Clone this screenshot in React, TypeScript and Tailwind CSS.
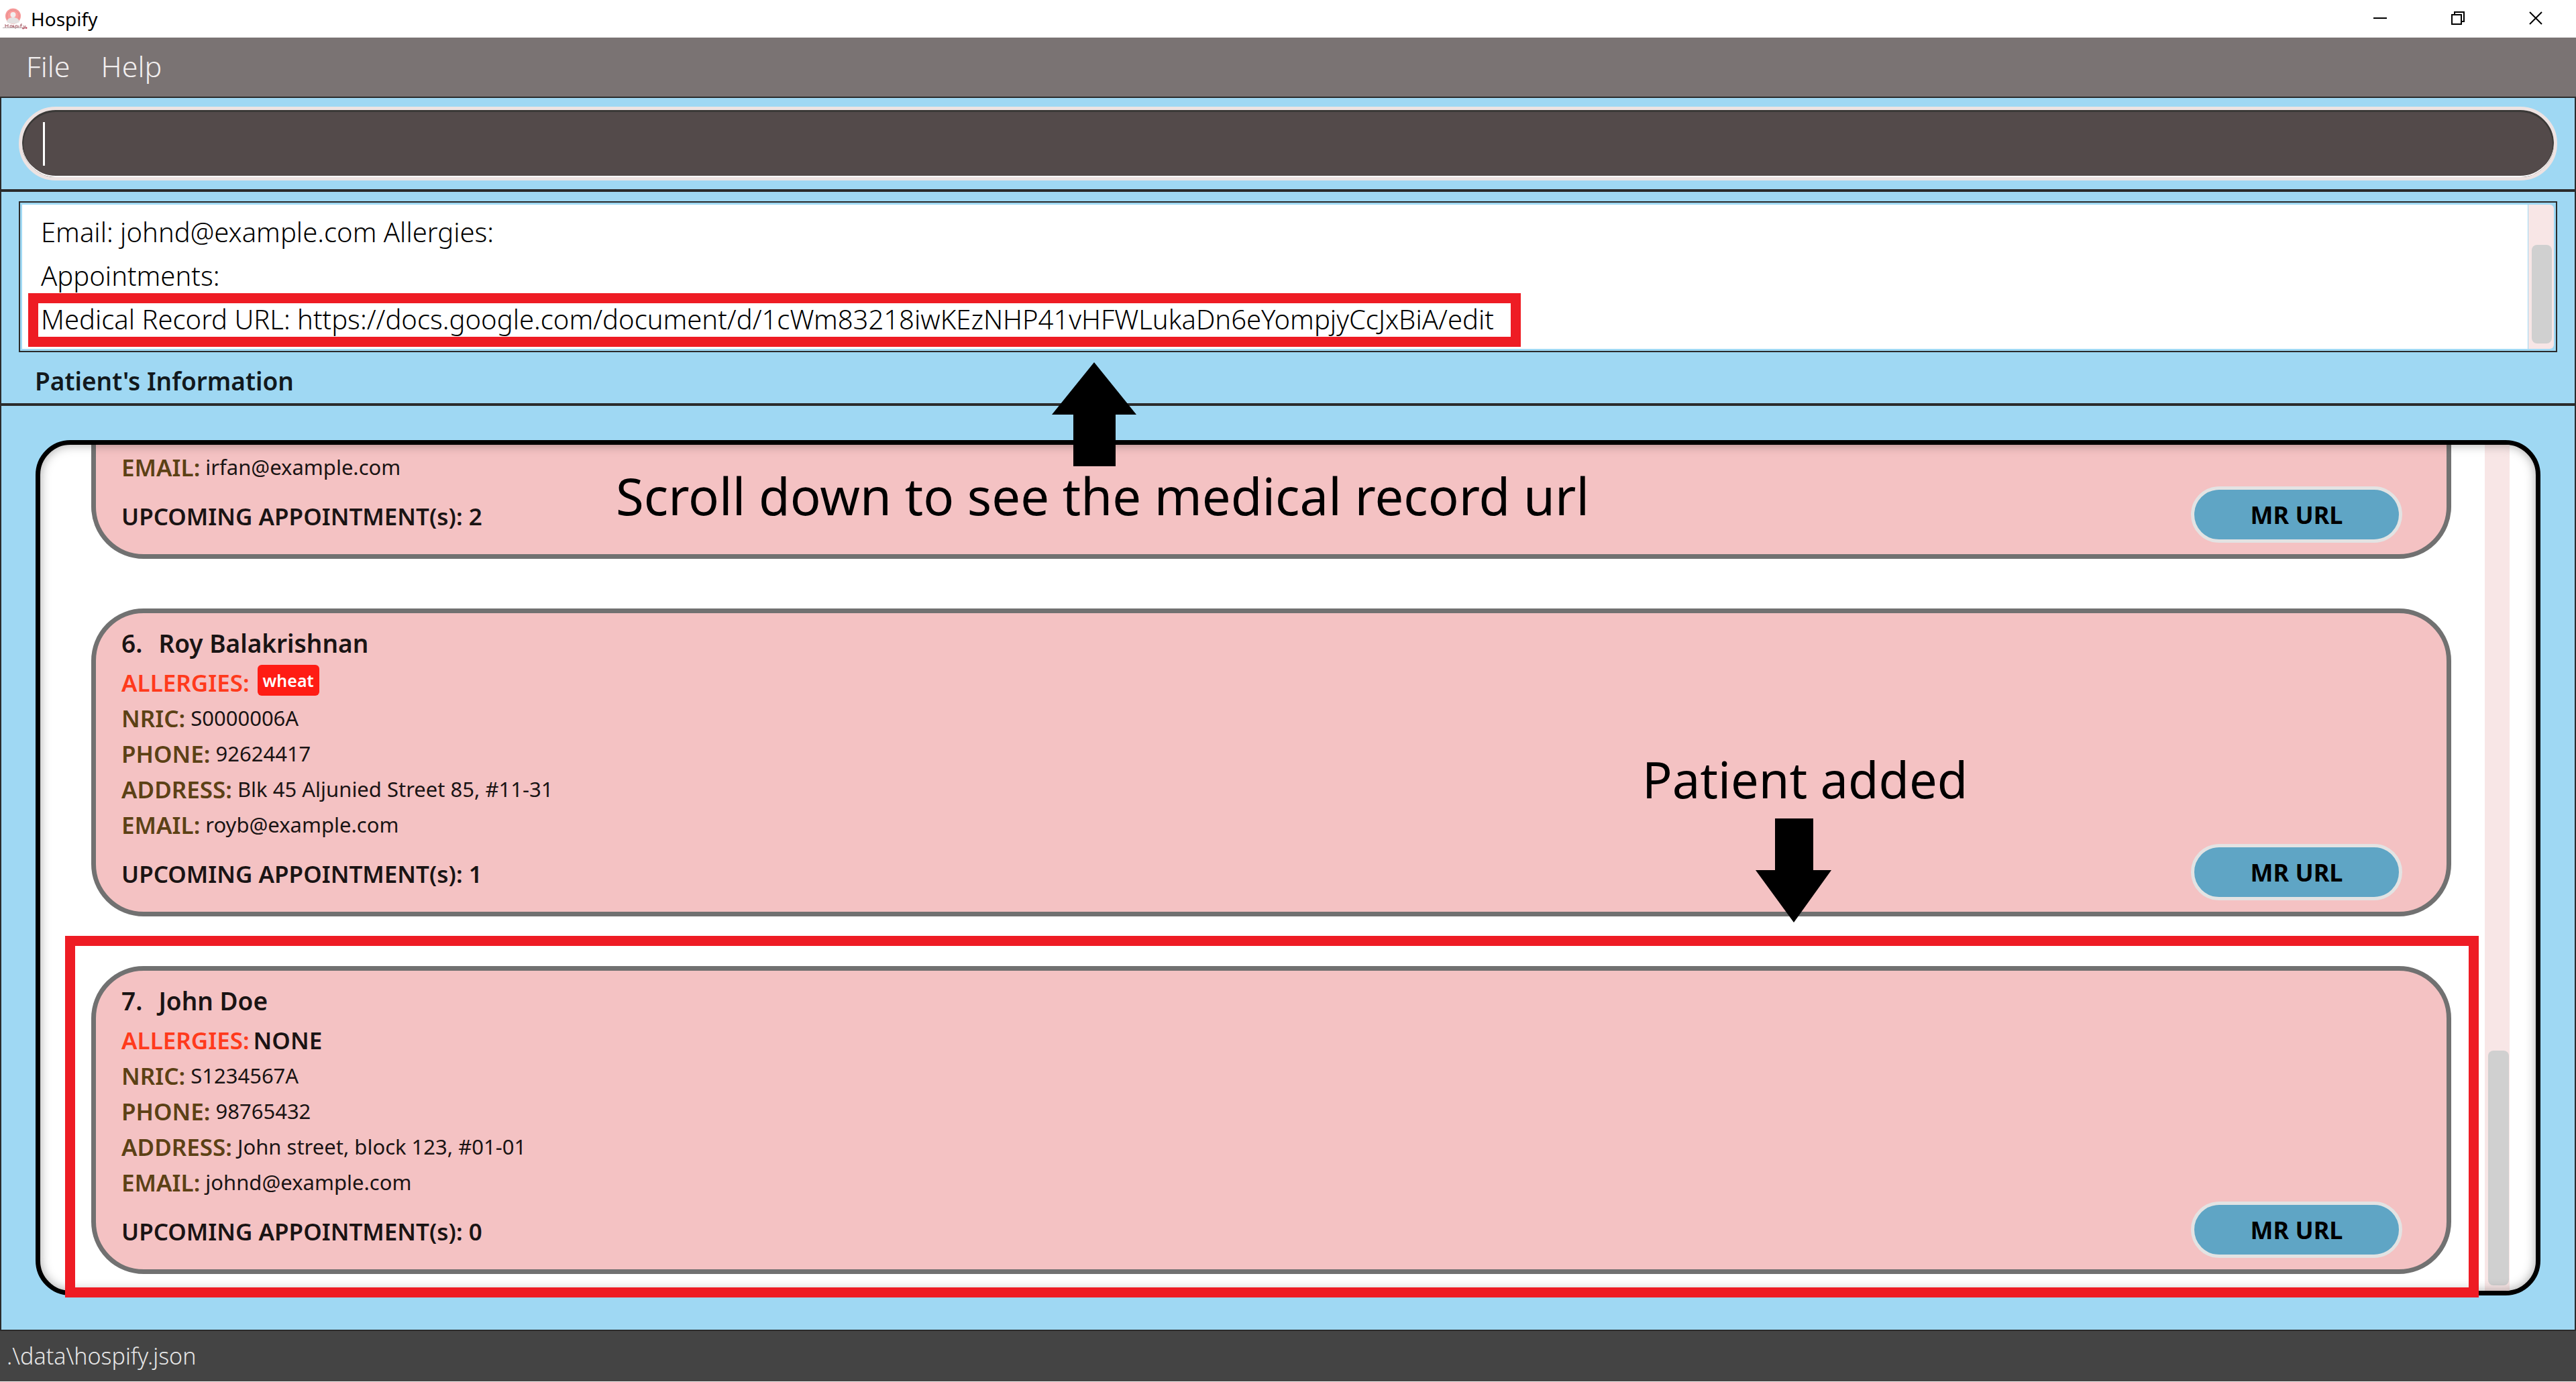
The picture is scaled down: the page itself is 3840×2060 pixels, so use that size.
import type { ReactNode } from 'react';

type Patient = {
  id: number;
  name?: string;
  allergies?: string[];
  fields: [string, string][];
  appointments: number;
};

const patients: Patient[] = [
  { id: 5, fields: [['EMAIL:', 'irfan@example.com']], appointments: 2 },
  {
    id: 6,
    name: 'Roy Balakrishnan',
    allergies: ['wheat'],
    fields: [
      ['NRIC:', 'S0000006A'],
      ['PHONE:', '92624417'],
      ['ADDRESS:', 'Blk 45 Aljunied Street 85, #11-31'],
      ['EMAIL:', 'royb@example.com'],
    ],
    appointments: 1,
  },
  {
    id: 7,
    name: 'John Doe',
    allergies: [],
    fields: [
      ['NRIC:', 'S1234567A'],
      ['PHONE:', '98765432'],
      ['ADDRESS:', 'John street, block 123, #01-01'],
      ['EMAIL:', 'johnd@example.com'],
    ],
    appointments: 0,
  },
];

function Logo() {
  return (
    <svg className="h-8 w-[38px]" viewBox="0 0 38 32" aria-hidden="true">
      <circle cx="15.500" cy="12" r="11.500" fill="#f79a9a" />
      <circle cx="15.500" cy="12" r="9" fill="#fb9c9b" stroke="#d98c8c" strokeWidth="0.800" />
      <circle cx="15.500" cy="10" r="4" fill="#f1eeee" />
      <path d="M6 21c1-5 4-7 9.500-7s8.500 2 9.500 7c-5 3-14 3-19 0z" fill="#e4e2e2" />
      <path
        d="M4 24v5M4 26.500h4M8 24v5M11 26h3v3h-3zM17 26h-2v1.500h2V29h-2M19 31v-5h3v3h-3M24 26v3M27 29v-5h2M26 26h3M31 26l1.500 3M34 26l-2 5"
        fill="none"
        stroke="#a8636d"
        strokeWidth="1"
      />
      <path d="M0 29.500h30" stroke="#b9b0b2" strokeWidth="1" />
      <circle cx="30.500" cy="30" r="1.500" fill="#b8616f" />
      <circle cx="35" cy="29.500" r="1.500" fill="#c4566a" />
    </svg>
  );
}

function WindowButton({ label, children }: { label: string; children: ReactNode }) {
  return (
    <button type="button" aria-label={label} className="flex h-[54px] w-[116px] items-center justify-center">
      <svg className="size-5 overflow-visible" viewBox="0 0 20 20" fill="none" stroke="#000" strokeWidth="2">
        {children}
      </svg>
    </button>
  );
}

function TitleBar() {
  return (
    <header className="flex h-14 shrink-0 items-start justify-between bg-white pr-0.5">
      <div className="flex h-14 items-center gap-1 pl-1">
        <Logo />
        <span className="text-[28px] leading-10 text-black">Hospify</span>
      </div>
      <div className="flex">
        <WindowButton label="Minimize">
          <path d="M0 10h20" />
        </WindowButton>
        <WindowButton label="Restore">
          <path d="M1 5h14v14H1zM5 5V1h14v14h-4" />
        </WindowButton>
        <WindowButton label="Close">
          <path d="M1 1l18 18M19 1L1 19" />
        </WindowButton>
      </div>
    </header>
  );
}

function PatientCard({ patient }: { patient: Patient }) {
  const { id, name, allergies, fields, appointments } = patient;
  return (
    <li className="flex min-h-[459px] shrink-0 items-end justify-between rounded-[78px] border-7 border-[#717171] bg-[#f4c2c3] pt-[18px] pr-[66px] pb-[17px] pl-[38px] text-[35px] leading-[53px] font-semibold text-[#1a1414]">
      <div className="pb-[13px]">
        {name && (
          <h2 className="mb-1.5 flex gap-6 text-[37px]">
            <span>{id}.</span>
            <span>{name}</span>
          </h2>
        )}
        {allergies && (
          <div className="flex gap-1.5">
            <span className="text-[#ff3a1c]">ALLERGIES:</span>
            {allergies.length === 0 && <span>NONE</span>}
            {allergies.map((a) => (
              <span key={a} className="ml-1.5 h-[46px] rounded-md bg-[#ff1c14] px-2 text-[25px] leading-[46px] text-white">
                {a}
              </span>
            ))}
          </div>
        )}
        <dl>
          {fields.map(([label, value]) => (
            <div key={label} className="flex items-center gap-2">
              <dt className="text-[#5c4115]">{label}</dt>
              <dd className="text-[31px] font-normal">{value}</dd>
            </div>
          ))}
        </dl>
        <p className="mt-5">UPCOMING APPOINTMENT(s): {appointments}</p>
      </div>
      <button
        type="button"
        className="h-[84px] w-[315px] rounded-full border-5 border-[#e3e3e3] bg-[#5fa5c5] text-[36px] font-bold text-black"
      >
        MR URL
      </button>
    </li>
  );
}

function Annotations() {
  return (
    <div className="pointer-events-none absolute inset-0 text-black">
      <svg className="absolute top-[-116px] left-[1515px] h-[155px] w-[126px]" viewBox="0 0 126 155" aria-hidden="true">
        <path d="M63 0l63 78H95v77H32V78H0z" />
      </svg>
      <p className="absolute top-[33px] left-[865px] text-[76px] leading-[100px] whitespace-nowrap">
        Scroll down to see the medical record url
      </p>
      <p className="absolute top-[456px] left-[2395px] text-[74px] leading-[100px] whitespace-nowrap">Patient added</p>
      <svg className="absolute top-[564px] left-[2564px] h-[155px] w-[113px]" viewBox="0 0 113 155" aria-hidden="true">
        <path d="M29 0h57v77h27l-56 78L0 77h29z" />
      </svg>
      <div className="absolute right-[92px] bottom-[-3px] left-11 h-[539px] border-15 border-[#ee1c24]" />
    </div>
  );
}

export default function App() {
  return (
    <div className="flex h-screen flex-col overflow-hidden bg-[#9fd8f3] font-['Noto_Sans',sans-serif]">
      <TitleBar />

      <nav className="flex h-[88px] shrink-0 items-center gap-[46px] bg-[#7a7373] pb-0.5 pl-[39px] text-[43px] leading-[60px] font-light text-[#f2efef]">
        <button type="button">File</button>
        <button type="button">Help</button>
      </nav>

      <main className="flex min-h-0 flex-1 flex-col border-2 border-[#2b2b2b]">
        <section className="border-b-4 border-[#2b2b2b] px-[26px] py-[13px]">
          <label className="flex h-[110px] items-center rounded-full border-5 border-[#ede3e2] bg-[#534a4a] pl-[31px] shadow-[inset_0_-2px_0_#ffffff,inset_0_1px_0_2px_#3a3937]">
            <span className="h-[65px] w-[3px] bg-white" />
            <input
              type="text"
              aria-label="Command"
              className="h-[90px] min-w-0 flex-1 bg-transparent px-2 text-[40px] font-light text-white caret-transparent outline-none"
            />
          </label>
        </section>

        <section className="border-b-4 border-[#2b2b2b] pt-[14px]">
          <div className="mx-[26px] flex border-2 border-[#2b2b2b] p-[3px]">
            <div className="flex-1 bg-white pt-2 pb-3 pl-7 text-[40px] leading-[65px] font-light text-black">
              <p>Email: johnd@example.com Allergies:</p>
              <p>Appointments:</p>
              <p className="relative w-fit">
                Medical Record URL: https://docs.google.com/document/d/1cWm83218iwKEzNHP41vHFWLukaDn6eYompjyCcJxBiA/edit
                <span className="absolute -top-1.5 -right-10 -bottom-[9px] -left-[19px] border-15 border-[#ee1c24]" />
              </p>
            </div>
            <div className="ml-px flex w-[38px] flex-col justify-end rounded-r-md bg-[#f8e6e6] pt-[60px] pr-[3px] pb-2 pl-[5px]">
              <div className="flex-1 rounded-lg bg-[#d0d0d0]" />
            </div>
          </div>
          <h1 className="mt-[18px] mb-2 ml-[50px] text-[37px] leading-[50px] font-semibold text-[#12191d]">
            Patient's Information
          </h1>
        </section>

        <section className="flex min-h-0 flex-1 p-[51px]">
          <div className="relative flex min-w-0 flex-1">
            <div className="flex min-w-0 flex-1 overflow-hidden rounded-[52px] border-7 border-black bg-white pr-[39px]">
              <ul className="flex flex-1 flex-col justify-end gap-[74px] pr-[50px] pb-[25px] pl-[76px]">
                {patients.map((p) => (
                  <PatientCard key={p.id} patient={p} />
                ))}
              </ul>
              <div className="flex w-[37px] flex-col justify-end bg-[#f8e6e6] pr-px pb-2 pl-[5px]">
                <div className="h-[350px] rounded-lg bg-[#d0d0d0]" />
              </div>
            </div>
            <div className="pointer-events-none absolute inset-[7px] rounded-[45px] shadow-[inset_0_0_16px_rgba(0,0,0,0.350)]" />
            <Annotations />
          </div>
        </section>
      </main>

      <footer className="flex h-19 shrink-0 items-center border-b border-[#f5efef] bg-[#444444] pl-2.5 text-[34px] font-light text-[#e6e6e6]">
        .\data\hospify.json
      </footer>
    </div>
  );
}
